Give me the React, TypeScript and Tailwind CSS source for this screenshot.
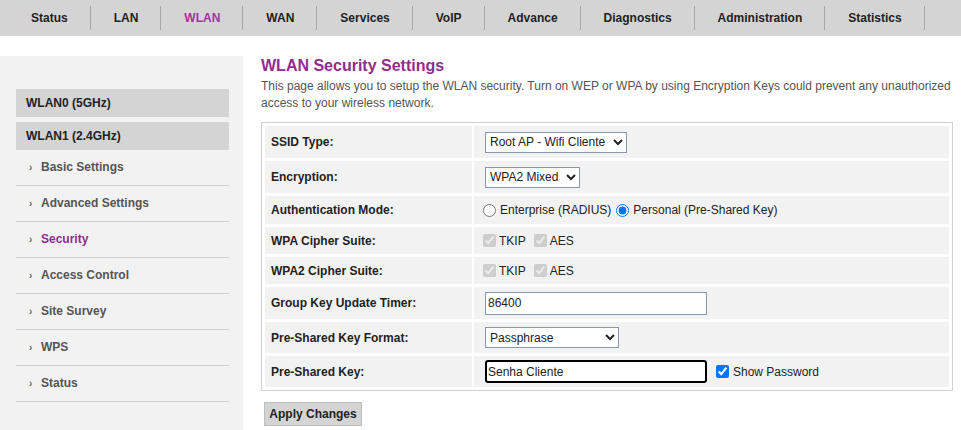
import { useState } from "react";

const tabs = ["Status", "LAN", "WLAN", "WAN", "Services", "VoIP", "Advance", "Diagnostics", "Administration", "Statistics"];

const menu = ["Basic Settings", "Advanced Settings", "Security", "Access Control", "Site Survey", "WPS", "Status"];

function Row({ label, h, children }: { label: string; h: string; children: React.ReactNode }) {
  return (
    <div className={`grid grid-cols-[207px_1fr] gap-[2px] ${h}`}>
      <div className="flex items-center bg-[#f2f2f2] pl-[6px] font-bold text-[#222]">{label}</div>
      <div className="flex items-center bg-[#f2f2f2] pl-[9px] text-[#222]">{children}</div>
    </div>
  );
}

export default function App() {
  const [showPwd, setShowPwd] = useState(true);
  const [mode, setMode] = useState("personal");

  return (
    <div className="min-h-screen bg-white font-['Liberation_Sans',Arial,sans-serif] text-[12px] text-[#222]">
      <nav className="flex h-[36px] items-center bg-[#d4d4d4] pl-[8px]">
        {tabs.map((t) => (
          <div key={t} className="flex items-center">
            <span className={`pl-[23px] pr-[22px] font-bold ${t === "WLAN" ? "text-[#a2339d]" : "text-[#222]"}`}>{t}</span>
            <span className="h-[24px] w-px bg-[#a8a8a8]" />
          </div>
        ))}
      </nav>

      <div className="mt-[20px] flex">
        <aside className="w-[243px] shrink-0 bg-[#f2f2f2] pb-[40px] pl-[16px] pr-[14px] pt-[33px]">
          <div className="flex h-[28px] items-center bg-[#d4d4d4] pl-[10px] font-bold">WLAN0 (5GHz)</div>
          <div className="mt-[5px] flex h-[28px] items-center bg-[#d4d4d4] pl-[10px] font-bold">WLAN1 (2.4GHz)</div>
          {menu.map((m) => (
            <div key={m} className="flex h-[36px] items-center border-b border-[#cfcfcf] pb-[1px] pl-[13px]">
              <span className="w-[12px] text-[10px] font-bold text-[#666]">›</span>
              <span className={`font-bold ${m === "Security" ? "text-[#922c8e]" : "text-[#555]"}`}>{m}</span>
            </div>
          ))}
        </aside>

        <main className="ml-[18px] w-[692px]">
          <h1 className="text-[16px] font-bold leading-[20px] text-[#922c8e]">WLAN Security Settings</h1>
          <p className="mt-[2px] leading-[17px] text-[#555]">
            This page allows you to setup the WLAN security. Turn on WEP or WPA by using Encryption Keys could prevent any unauthorized access to your wireless network.
          </p>

          <div className="mt-[10px] flex flex-col gap-[3px] border border-[#d0d0d0] p-[3px]">
            <Row label="SSID Type:" h="h-[32px]">
              <select className="ml-[2px] h-[21px] w-[142px] border border-[#8a97a8] bg-white text-[12px]" defaultValue="root">
                <option value="root">Root AP - Wifi Cliente</option>
              </select>
            </Row>
            <Row label="Encryption:" h="h-[32px]">
              <select className="ml-[2px] h-[21px] w-[95px] border border-[#8a97a8] bg-white text-[12px]" defaultValue="mixed">
                <option value="mixed">WPA2 Mixed</option>
              </select>
            </Row>
            <Row label="Authentication Mode:" h="h-[28px]">
              <input type="radio" name="auth" className="m-0 h-[13px] w-[13px]" checked={mode === "ent"} onChange={() => setMode("ent")} />
              <span className="ml-[4px]">Enterprise (RADIUS)</span>
              <input type="radio" name="auth" className="m-0 ml-[5px] h-[13px] w-[13px]" checked={mode === "personal"} onChange={() => setMode("personal")} />
              <span className="ml-[4px]">Personal (Pre-Shared Key)</span>
            </Row>
            <Row label="WPA Cipher Suite:" h="h-[27px]">
              <input type="checkbox" disabled defaultChecked className="m-0 h-[13px] w-[13px]" />
              <span className="ml-[3px]">TKIP</span>
              <input type="checkbox" disabled defaultChecked className="m-0 ml-[8px] h-[13px] w-[13px]" />
              <span className="ml-[3px]">AES</span>
            </Row>
            <Row label="WPA2 Cipher Suite:" h="h-[27px]">
              <input type="checkbox" disabled defaultChecked className="m-0 h-[13px] w-[13px]" />
              <span className="ml-[3px]">TKIP</span>
              <input type="checkbox" disabled defaultChecked className="m-0 ml-[8px] h-[13px] w-[13px]" />
              <span className="ml-[3px]">AES</span>
            </Row>
            <Row label="Group Key Update Timer:" h="h-[32px]">
              <input className="ml-[2px] h-[23px] w-[222px] border border-[#8a97a8] bg-white px-[2px] text-[12px]" defaultValue="86400" />
            </Row>
            <Row label="Pre-Shared Key Format:" h="h-[31px]">
              <select className="ml-[2px] h-[21px] w-[134px] border border-[#8a97a8] bg-white text-[12px]" defaultValue="pass">
                <option value="pass">Passphrase</option>
              </select>
            </Row>
            <Row label="Pre-Shared Key:" h="h-[31px]">
              <input
                type={showPwd ? "text" : "password"}
                className="ml-[2px] h-[23px] w-[222px] rounded-[3px] border-2 border-black bg-white px-[1px] text-[12px] outline-none"
                defaultValue="Senha Cliente"
              />
              <input type="checkbox" className="m-0 ml-[9px] h-[13px] w-[13px]" checked={showPwd} onChange={(e) => setShowPwd(e.target.checked)} />
              <span className="ml-[4px]">Show Password</span>
            </Row>
          </div>

          <button className="ml-[3px] mt-[11px] h-[24px] w-[98px] border border-[#bdbdbd] bg-[#d4d4d4] text-[12px] font-bold text-[#222]">
            Apply Changes
          </button>
        </main>
      </div>
    </div>
  );
}
